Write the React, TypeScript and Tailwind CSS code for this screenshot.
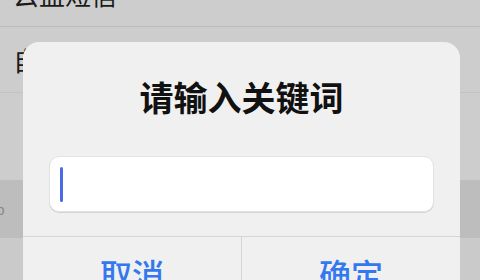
import React from 'react';

const font = '"Noto Sans CJK SC", "Noto Sans", sans-serif';

export default function App() {
  return (
    <div className="relative w-[480px] h-[280px] overflow-hidden bg-[#cdcdcd]" style={{ fontFamily: font }}>
      {/* Background list */}
      <div className="flex flex-col">
        <div className="h-[27px] border-b border-[#bcbcbc] px-[13px] overflow-hidden">
          <div className="text-[26px] leading-[26px] text-[#1a1a1a] -mt-[19px]">云盘短信</div>
        </div>
        <div className="h-[66px] border-b border-[#c2c2c2] px-[13px] flex items-center">
          <span className="text-[26px] leading-none text-[#1a1a1a]">自动备份</span>
        </div>
        <div className="h-[87px]" />
        <div className="h-[58px] bg-[#bdbdbd] flex items-center">
          <span className="text-[14px] text-[#888] -ml-[4px]">p</span>
          <span className="text-[14px] text-[#777] ml-[14px]">⋮</span>
        </div>
        <div className="h-[42px] bg-[#cacaca]" />
      </div>

      {/* Dialog */}
      <div className="absolute left-[23px] top-[42px] w-[437px] h-[260px] rounded-[16px] bg-[#f0f0f0] flex flex-col">
        <div className="h-[114px] flex items-center justify-center pb-[4px]">
          <span className="text-[34px] leading-none font-semibold text-[#111]">请输入关键词</span>
        </div>
        <div className="px-[26px]">
          <div className="h-[56px] rounded-[10px] bg-white border border-[#e2e2e2] shadow-[0_1px_0_#d4d4d4] flex items-center px-[10px]">
            <div className="w-[3px] h-[35px] rounded-full bg-[#4a6ae6]" />
          </div>
        </div>
        <div className="mt-[24px] border-t border-[#d6d6d6] flex flex-1">
          <div className="flex-1 border-r border-[#d6d6d6] flex justify-center pt-[12px]">
            <span className="text-[32px] font-medium text-[#3478f0]">取消</span>
          </div>
          <div className="flex-1 flex justify-center pt-[12px]">
            <span className="text-[32px] font-medium text-[#3478f0]">确定</span>
          </div>
        </div>
      </div>
    </div>
  );
}
